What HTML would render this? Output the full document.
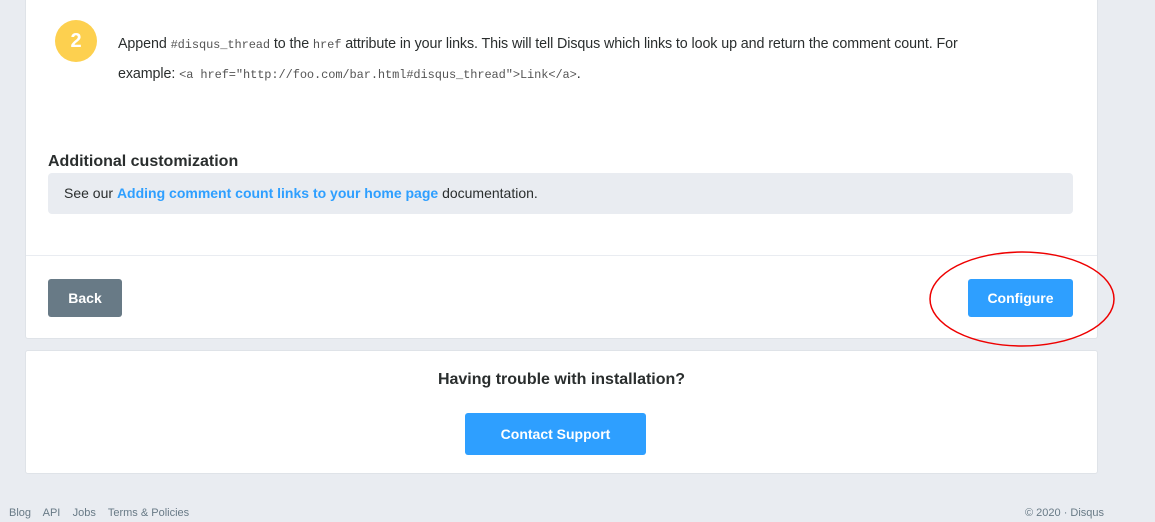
<!DOCTYPE html>
<html><head><style>
body{margin:0;width:1155px;height:522px;background:#e9ecf1;font-family:"Liberation Sans",sans-serif;color:#2a2e2e;position:relative;overflow:hidden}
.card{position:absolute;left:25px;width:1071px;background:#fff;border:1px solid #dfe3e8;border-radius:3px}
code{font-family:"Liberation Mono",monospace;font-size:12px;color:#555;white-space:nowrap}
.btn{position:absolute;color:#fff;font-weight:bold;font-size:14px;display:flex;align-items:center;justify-content:center;border-radius:3px}
</style></head><body>
<div class="card" style="top:-5px;height:343px;border-top:none">
  <div style="position:absolute;left:29px;top:25px;width:42px;height:42px;border-radius:50%;background:#fdd04f;color:#fff;font-weight:bold;font-size:20px;display:flex;align-items:center;justify-content:center">2</div>
  <div style="position:absolute;left:92px;top:35px;width:880px;font-size:14.3px;line-height:29px;letter-spacing:-0.1px">Append <code>#disqus_thread</code> to the <code>href</code> attribute in your links. This will tell Disqus which links to look up and return the comment count. For example: <code>&lt;a href="http://foo.com/bar.html#disqus_thread"&gt;Link&lt;/a&gt;</code>.</div>
  <div style="position:absolute;left:22px;top:158px;font-size:16px;font-weight:bold;color:#2a2e2e">Additional customization</div>
  <div style="position:absolute;left:22px;top:178px;width:1025px;height:41px;background:#e9ecf1;border-radius:4px;font-size:14px;line-height:41px;padding-left:16px;box-sizing:border-box">See our <span style="color:#2e9fff;font-weight:bold">Adding comment count links to your home page</span> documentation.</div>
  <div style="position:absolute;left:0;right:0;top:260px;border-top:1px solid #e9ecf1"></div>
</div>
<div class="btn" style="left:48px;top:279px;width:74px;height:38px;background:#687a86">Back</div>
<div class="btn" style="left:968px;top:279px;width:105px;height:38px;background:#2e9fff">Configure</div>
<svg style="position:absolute;left:928px;top:250px" width="190" height="100"><ellipse cx="94" cy="49" rx="92" ry="47" fill="none" stroke="#e00" stroke-width="1.5"/></svg>
<div class="card" style="top:350px;height:122px">
  <div style="position:absolute;left:0;right:0;top:20px;text-align:center;font-size:16px;font-weight:bold">Having trouble with installation?</div>
</div>
<div class="btn" style="left:465px;top:413px;width:181px;height:42px;background:#2e9fff">Contact Support</div>
<div style="position:absolute;left:9px;top:507px;font-size:11px;color:#687a86">Blog &nbsp;&nbsp; API &nbsp;&nbsp; Jobs &nbsp;&nbsp; Terms &amp; Policies</div>
<div style="position:absolute;left:1025px;top:507px;font-size:11px;color:#687a86">© 2020 · Disqus</div>
</body></html>
